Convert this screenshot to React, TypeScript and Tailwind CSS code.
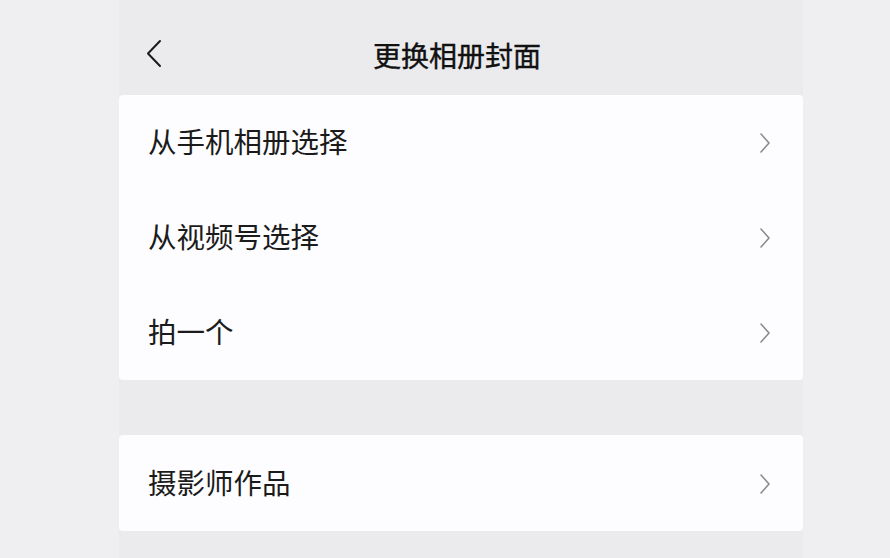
const font = { fontFamily: '"Noto Sans CJK SC", "Noto Sans", sans-serif' };

function Chevron() {
  return (
    <svg width="12" height="22" viewBox="0 0 12 22" fill="none" className="shrink-0">
      <path d="M2 2 L10 11 L2 20" stroke="#8a8a8e" strokeWidth="1.6" strokeLinecap="round" strokeLinejoin="round" />
    </svg>
  );
}

function Row({ label }: { label: string }) {
  return (
    <div className="flex h-[95px] items-center justify-between pl-[29px] pr-[32px]">
      <span className="mt-[-3px] text-[28.5px] leading-none text-[#1b1b1b]">{label}</span>
      <Chevron />
    </div>
  );
}

export default function App() {
  return (
    <div className="h-[558px] w-[890px] overflow-hidden bg-[#efeff2] pl-[119px]" style={font}>
      <div className="flex h-full w-[684px] flex-col bg-[#ebebee]">
        <div className="relative flex h-[95px] items-center justify-center">
          <svg width="16" height="30" viewBox="0 0 16 30" fill="none" className="absolute left-[27px] top-[39px]">
            <path d="M14 2 L2 14.5 L14 27" stroke="#1b1b1b" strokeWidth="2" strokeLinecap="round" strokeLinejoin="round" />
          </svg>
          <span className="ml-[-8px] mt-[14px] text-[28px] font-normal leading-none text-[#111]" style={{ WebkitTextStroke: "0.4px #111" }}>更换相册封面</span>
        </div>
        <div className="rounded-[4px] bg-[#fdfdff]">
          <Row label="从手机相册选择" />
          <Row label="从视频号选择" />
          <Row label="拍一个" />
        </div>
        <div className="h-[55px]" />
        <div className="rounded-[4px] bg-[#fdfdff]">
          <div className="h-[1px]" />
          <Row label="摄影师作品" />
        </div>
      </div>
    </div>
  );
}
